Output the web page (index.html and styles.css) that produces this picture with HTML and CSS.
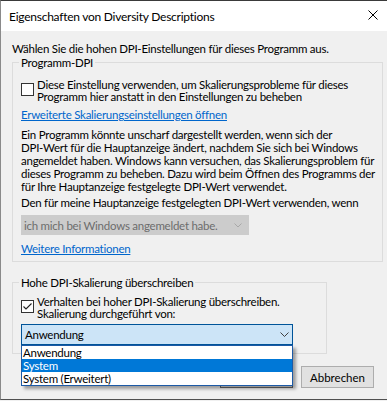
FILE: index.html
```html
<!DOCTYPE html>
<html lang="de">

<head>
    <meta charset="UTF-8">
    <title>Eigenschaften von Diversity Descriptions</title>
    <link rel="stylesheet" href="styles.css">
</head>

<body>
    <div class="window">
        <div class="titlebar">
            <span class="title">Eigenschaften von Diversity Descriptions</span>
            <svg class="close" width="10" height="10" viewBox="0 0 10 10">
                <path d="M0.5 0.5 L9.5 9.5 M9.5 0.5 L0.5 9.5" stroke="#000" stroke-width="1" fill="none" />
            </svg>
        </div>

        <div class="content">
            <p class="intro">Wählen Sie die hohen DPI-Einstellungen für dieses Programm aus.</p>

            <fieldset class="group group-prog">
                <legend>Programm-DPI</legend>
                <label class="check">
                    <span class="box"></span>
                    <span class="check-text">Diese Einstellung verwenden, um Skalierungsprobleme für dieses<br>Programm hier anstatt in den Einstellungen zu beheben</span>
                </label>
                <a class="link link-first" href="#">Erweiterte Skalierungseinstellungen öffnen</a>
                <p class="para">Ein Programm könnte unscharf dargestellt werden, wenn sich der<br>DPI-Wert für die Hauptanzeige ändert, nachdem Sie sich bei Windows<br>angemeldet haben. Windows kann versuchen, das Skalierungsproblem für<br>dieses Programm zu beheben. Dazu wird beim Öffnen des Programms der<br>für Ihre Hauptanzeige festgelegte DPI-Wert verwendet.</p>
                <p class="para-when">Den für meine Hauptanzeige festgelegten DPI-Wert verwenden, wenn</p>
                <div class="combo combo-disabled">
                    <span>ich mich bei Windows angemeldet habe.</span>
                    <svg width="8" height="5" viewBox="0 0 8 5">
                        <path d="M0.5 0.5 L4 4 L7.5 0.5" stroke="#a8a8a8" fill="none" />
                    </svg>
                </div>
                <a class="link link-more" href="#">Weitere Informationen</a>
            </fieldset>

            <fieldset class="group group-over">
                <legend>Hohe DPI-Skalierung überschreiben</legend>
                <label class="check">
                    <span class="box">
                        <svg width="11" height="11" viewBox="0 0 11 11">
                            <path d="M1.5 5.5 L4 8 L9.5 2.5" stroke="#222" stroke-width="1.1" fill="none" />
                        </svg>
                    </span>
                    <span class="check-text">Verhalten bei hoher DPI-Skalierung überschreiben.<br>Skalierung durchgeführt von:</span>
                </label>
                <div class="combo-wrap">
                    <div class="combo combo-focus">
                        <span>Anwendung</span>
                        <svg width="9" height="5" viewBox="0 0 9 5">
                            <path d="M0.5 0.5 L4.5 4.5 L8.5 0.5" stroke="#404040" fill="none" />
                        </svg>
                    </div>
                    <ul class="dropdown">
                        <li>Anwendung</li>
                        <li class="selected">System</li>
                        <li>System (Erweitert)</li>
                    </ul>
                </div>
            </fieldset>

            <div class="buttons">
                <button class="btn btn-ok">OK</button>
                <button class="btn">Abbrechen</button>
            </div>
        </div>
    </div>
</body>

</html>
```

FILE: styles.css
```css
* {
    padding: 0;
    margin: 0;
    list-style: none;
    box-sizing: border-box;
}

body {
    width: 387px;
    height: 401px;
    overflow: hidden;
    background-color: #f0f0f0;
    font-family: Lato, "Liberation Sans", sans-serif;
    font-size: 11.5px;
    letter-spacing: -0.25px;
    white-space: nowrap;
    color: #000;
}

.window {
    height: 400px;
    background-color: #f0f0f0;
    border-top: 1px solid #3a3a3a;
    border-left: 1px solid #8a8a8a;
    border-bottom: 1px solid #505050;
}

.titlebar {
    height: 30px;
    background-color: #fff;
    display: flex;
    align-items: flex-start;
    justify-content: space-between;
    padding: 9px 9px 0 8px;
}

.title {
    line-height: 13px;
    font-size: 12px;
}

.close {
    margin-top: 0px;
}

.content {
    padding: 11px 4px 0 11px;
}

.intro {
    line-height: 13px;
}

.group {
    border: 1px solid #dcdcdc;
    margin-top: 1px;
    min-width: 0;
}

.group legend {
    padding: 0 2px;
    margin-left: -2px;
    line-height: 13px;
}

.group-prog {
    padding: 10px 0 6px 8px;
}

.group-over {
    width: 315px;
    margin-top: 14px;
    padding: 7px 0 8px 8px;
}

.check {
    display: flex;
    gap: 3px;
    line-height: 12px;
}

.box {
    flex: none;
    width: 13px;
    height: 13px;
    margin-top: 4px;
    border: 1px solid #333;
    background-color: #fff;
}

.box svg {
    display: block;
}

.link {
    display: block;
    width: fit-content;
    line-height: 13px;
    color: #0066cc;
    text-decoration: underline;
}

.link-first {
    margin-top: 5px;
}

.para {
    margin-top: 7px;
    line-height: 13px;
}

.para-when {
    margin-top: 3px;
    line-height: 13px;
}

.combo {
    display: flex;
    align-items: center;
    justify-content: space-between;
}

.combo svg {
    display: block;
}

.combo-disabled {
    width: 228px;
    height: 20px;
    margin-top: 6px;
    padding: 0 6px 0 2px;
    background-color: #cccccc;
    border: 1px solid #cccccc;
    color: #6d6d6d;
}

.link-more {
    margin-top: 7px;
}

.combo-wrap {
    position: relative;
    width: 272px;
    margin-top: 4px;
}

.combo-focus {
    height: 21px;
    padding: 0 3px 0 3px;
    background-color: #cce4f7;
    border: 1px solid #005499;
}

.dropdown {
    position: absolute;
    top: 100%;
    left: 0;
    width: 272px;
    z-index: 5;
    background-color: #fff;
    border: 1px solid #1c5aa6;
    box-shadow: 3px 3px 3px rgba(0, 0, 0, .35);
}

.dropdown li {
    height: 13px;
    line-height: 13px;
    padding-left: 1px;
}

.dropdown li.selected {
    background-color: #0078d7;
    color: #fff;
}

.buttons {
    display: flex;
    justify-content: flex-end;
    gap: 8px;
    margin-top: 12px;
    padding-right: 9px;
}

.btn {
    width: 73px;
    height: 22px;
    font: inherit;
    color: #000;
    background-color: #e1e1e1;
    border: 1px solid #adadad;
}

.btn-ok {
    border: 1px solid #6a6a6a;
}
```
